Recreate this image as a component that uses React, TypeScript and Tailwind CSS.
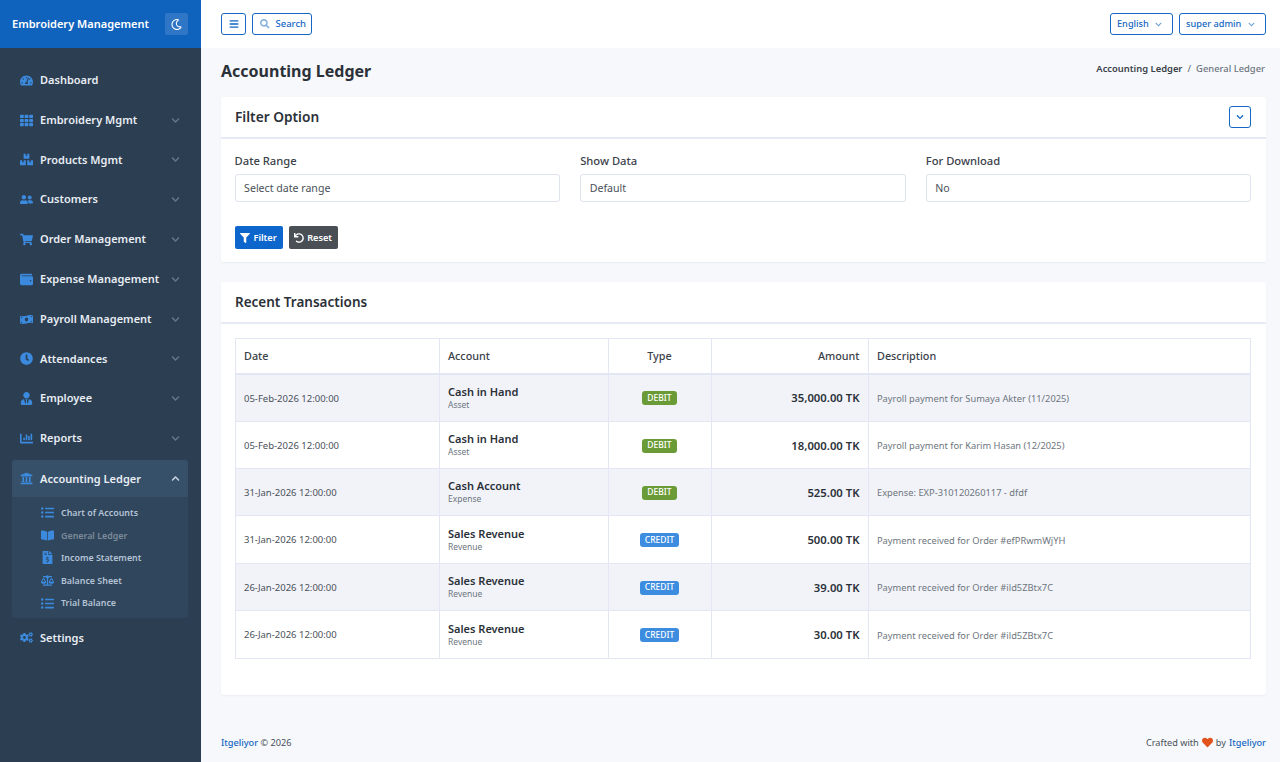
import type { ComponentType } from 'react'
import {
  FaBalanceScale,
  FaBars,
  FaBookOpen,
  FaBoxes,
  FaChartBar,
  FaChevronDown,
  FaChevronUp,
  FaClock,
  FaCogs,
  FaFileInvoiceDollar,
  FaFilter,
  FaHeart,
  FaListUl,
  FaMoneyBillWave,
  FaRegMoon,
  FaSearch,
  FaShoppingCart,
  FaTachometerAlt,
  FaTh,
  FaUndo,
  FaUniversity,
  FaUserFriends,
  FaUserTie,
  FaWallet,
} from 'react-icons/fa'

type Icon = ComponentType<{ className?: string }>

const navItems: { label: string; icon: Icon; arrow?: boolean }[] = [
  { label: 'Dashboard', icon: FaTachometerAlt },
  { label: 'Embroidery Mgmt', icon: FaTh, arrow: true },
  { label: 'Products Mgmt', icon: FaBoxes, arrow: true },
  { label: 'Customers', icon: FaUserFriends, arrow: true },
  { label: 'Order Management', icon: FaShoppingCart, arrow: true },
  { label: 'Expense Management', icon: FaWallet, arrow: true },
  { label: 'Payroll Management', icon: FaMoneyBillWave, arrow: true },
  { label: 'Attendances', icon: FaClock, arrow: true },
  { label: 'Employee', icon: FaUserTie, arrow: true },
  { label: 'Reports', icon: FaChartBar, arrow: true },
]

const subItems: { label: string; icon: Icon; muted?: boolean }[] = [
  { label: 'Chart of Accounts', icon: FaListUl },
  { label: 'General Ledger', icon: FaBookOpen, muted: true },
  { label: 'Income Statement', icon: FaFileInvoiceDollar },
  { label: 'Balance Sheet', icon: FaBalanceScale },
  { label: 'Trial Balance', icon: FaListUl },
]

const rows = [
  { date: '05-Feb-2026 12:00:00', account: 'Cash in Hand', kind: 'Asset', type: 'DEBIT', amount: '35,000.00 TK', desc: 'Payroll payment for Sumaya Akter (11/2025)', h: 'h-[48px]' },
  { date: '05-Feb-2026 12:00:00', account: 'Cash in Hand', kind: 'Asset', type: 'DEBIT', amount: '18,000.00 TK', desc: 'Payroll payment for Karim Hasan (12/2025)', h: 'h-[47px]' },
  { date: '31-Jan-2026 12:00:00', account: 'Cash Account', kind: 'Expense', type: 'DEBIT', amount: '525.00 TK', desc: 'Expense: EXP-310120260117 - dfdf', h: 'h-[47px]' },
  { date: '31-Jan-2026 12:00:00', account: 'Sales Revenue', kind: 'Revenue', type: 'CREDIT', amount: '500.00 TK', desc: 'Payment received for Order #efPRwmWjYH', h: 'h-[48px]' },
  { date: '26-Jan-2026 12:00:00', account: 'Sales Revenue', kind: 'Revenue', type: 'CREDIT', amount: '39.00 TK', desc: 'Payment received for Order #ild5ZBtx7C', h: 'h-[47px]' },
  { date: '26-Jan-2026 12:00:00', account: 'Sales Revenue', kind: 'Revenue', type: 'CREDIT', amount: '30.00 TK', desc: 'Payment received for Order #ild5ZBtx7C', h: 'h-[48px]' },
]

function NavRow({ label, icon: Ico, arrow }: { label: string; icon: Icon; arrow?: boolean }) {
  return (
    <div className="flex h-[39.8px] items-center pl-[19px] pr-[19px]">
      <span className="flex w-[14px] shrink-0 justify-center">
        <Ico className="text-[13px] text-[#3b8ade]" />
      </span>
      <span className="ml-[7px] flex-1 text-[11px] font-semibold text-[#e8edf3]">{label}</span>
      {arrow && <FaChevronDown className="mr-[2px] text-[9px] text-[#66778a]" />}
    </div>
  )
}

function Field({ label, value }: { label: string; value: string }) {
  return (
    <div>
      <div className="mb-[4px] text-[11.2px] font-medium leading-[18px] text-[#3a4149]">{label}</div>
      <div className="flex h-[28px] items-center rounded-[3px] border border-[#dfe3ef] bg-white px-[8.5px] pt-[1px] text-[10.6px] text-[#4a5159]">
        {value}
      </div>
    </div>
  )
}

function OutlineButton({ label, w }: { label: string; w: string }) {
  return (
    <div className={`flex h-[22px] items-center justify-between rounded-[3px] border border-[#1567c3] pl-[6px] pr-[10px] text-[9.2px] font-medium text-[#1567c3] ${w}`}>
      {label}
      <FaChevronDown className="text-[7px] text-[#6a9fd8]" />
    </div>
  )
}

function TypeBadge({ type }: { type: string }) {
  const color = type === 'DEBIT' ? 'bg-[#6b9b37]' : 'bg-[#3c8ce0]'
  return (
    <div className="flex justify-center pt-[1px]">
      <span className={`flex h-[14px] items-center rounded-[3px] px-[5px] text-[8.5px] font-medium text-white ${color}`}>
        {type}
      </span>
    </div>
  )
}

export default function App() {
  return (
    <div className="flex h-[762px] overflow-hidden bg-[#f6f8fc] font-['Noto_Sans','Open_Sans',sans-serif]">
      <aside className="flex w-[200.5px] shrink-0 flex-col bg-[#2c3e52]">
        <div className="flex h-[48px] shrink-0 items-center justify-between bg-[#1063bd] pl-[12px] pr-[12.5px]">
          <span className="text-[11px] font-semibold text-white">Embroidery Management</span>
          <span className="flex h-[22px] w-[23px] items-center justify-center rounded-[2px] bg-[#2f77c6]">
            <FaRegMoon className="text-[11px] text-white" />
          </span>
        </div>
        <nav className="pt-[12.4px]">
          {navItems.map((item) => (
            <NavRow key={item.label} {...item} />
          ))}
          <div className="ml-[12px] mr-[12.5px] mt-[1.6px]">
            <div className="flex h-[37px] items-center rounded-t-[3px] bg-[#37506a] pl-[7px] pr-[6.5px] pt-[1px]">
              <span className="flex w-[14px] shrink-0 justify-center">
                <FaUniversity className="text-[13px] text-[#3b8ade]" />
              </span>
              <span className="ml-[7px] flex-1 text-[11px] font-semibold text-[#e8edf3]">Accounting Ledger</span>
              <FaChevronUp className="mr-[2px] text-[9px] text-[#cfd6de]" />
            </div>
            <div className="flex h-[121px] flex-col justify-center rounded-b-[3px] bg-[#30465c] pt-[1px]">
              {subItems.map(({ label, icon: Ico, muted }) => (
                <div key={label} className="flex h-[22.6px] items-center pl-[28px]">
                  <span className="flex w-[14px] shrink-0 justify-center">
                    <Ico className="text-[13px] text-[#3b8ade]" />
                  </span>
                  <span className={`ml-[7px] text-[8.9px] font-semibold ${muted ? 'text-[#7d8b9a]' : 'text-[#b4c3d6]'}`}>{label}</span>
                </div>
              ))}
            </div>
          </div>
          <NavRow label="Settings" icon={FaCogs} />
        </nav>
      </aside>

      <div className="flex min-w-0 flex-1 flex-col">
        <header className="flex h-[48px] shrink-0 items-center justify-between bg-white pl-[20.5px] pr-[14px]">
          <div className="flex items-center gap-[6px]">
            <div className="flex h-[22px] w-[25px] items-center justify-center rounded-[3px] border border-[#1567c3]">
              <FaBars className="text-[10px] text-[#1567c3]" />
            </div>
            <div className="flex h-[22px] w-[60px] items-center gap-[6px] rounded-[3px] border border-[#1567c3] pl-[7px]">
              <FaSearch className="text-[9.5px] text-[#7eaee0]" />
              <span className="text-[9.5px] font-medium text-[#1567c3]">Search</span>
            </div>
          </div>
          <div className="flex items-center gap-[6px]">
            <OutlineButton label="English" w="w-[63px]" />
            <OutlineButton label="super admin" w="w-[87px]" />
          </div>
        </header>

        <main className="flex flex-1 flex-col pl-[20.5px] pr-[14px]">
          <div className="flex h-[49px] shrink-0 items-center justify-between pb-[3px]">
            <h1 className="text-[16px] font-bold text-[#2b3138]">Accounting Ledger</h1>
            <div className="mb-[3px] mr-[1px] flex items-center text-[9.4px] font-medium">
              <span className="font-semibold text-[#3b4249]">Accounting Ledger</span>
              <span className="mx-[5px] text-[#6d757d]">/</span>
              <span className="text-[#6d757d]">General Ledger</span>
            </div>
          </div>

          <section className="h-[165px] shrink-0 rounded-[3px] bg-white shadow-[0_1px_2px_rgba(40,50,80,0.06)]">
            <div className="flex h-[42px] items-center justify-between border-b-2 border-[#e6eaf4] pl-[14px] pr-[15px]">
              <h2 className="pt-[1px] text-[13.7px] font-semibold text-[#2b3138]">Filter Option</h2>
              <div className="flex h-[22px] w-[22px] items-center justify-center rounded-[3px] border border-[#1567c3]">
                <FaChevronDown className="text-[8px] text-[#1567c3]" />
              </div>
            </div>
            <div className="pl-[13.6px] pr-[14.6px] pt-[13px]">
              <div className="grid grid-cols-3 gap-[20px]">
                <Field label="Date Range" value="Select date range" />
                <Field label="Show Data" value="Default" />
                <Field label="For Download" value="No" />
              </div>
              <div className="mt-[24px] flex gap-[6px]">
                <div className="flex h-[23px] w-[48px] items-center justify-center gap-[3px] rounded-[2px] bg-[#0d66cc] text-[9.2px] font-semibold text-white">
                  <FaFilter className="text-[10px]" />
                  Filter
                </div>
                <div className="flex h-[23px] w-[49px] items-center justify-center gap-[3px] rounded-[2px] bg-[#4a4f55] text-[9.2px] font-semibold text-white">
                  <FaUndo className="text-[10px]" />
                  Reset
                </div>
              </div>
            </div>
          </section>

          <section className="mt-[20px] h-[413px] shrink-0 rounded-[3px] bg-white shadow-[0_1px_2px_rgba(40,50,80,0.06)]">
            <div className="flex h-[42px] items-center border-b-2 border-[#e6eaf4] pl-[14px]">
              <h2 className="pt-[1px] text-[13.5px] font-semibold text-[#2b3138]">Recent Transactions</h2>
            </div>
            <div className="pl-[13.5px] pr-[15px] pt-[14px]">
              <table className="w-full table-fixed border-collapse border border-[#e3e7f3]">
                <colgroup>
                  <col className="w-[204px]" />
                  <col className="w-[169px]" />
                  <col className="w-[103px]" />
                  <col className="w-[157px]" />
                  <col />
                </colgroup>
                <thead>
                  <tr className="h-[35px] border-b-2 border-[#e3e7f3] text-[10.8px] font-medium text-[#3a4149]">
                    <th className="border-r border-[#e3e7f3] px-[8.5px] text-left font-medium">Date</th>
                    <th className="border-r border-[#e3e7f3] px-[8.5px] text-left font-medium">Account</th>
                    <th className="border-r border-[#e3e7f3] px-[8.5px] text-center font-medium">Type</th>
                    <th className="border-r border-[#e3e7f3] px-[8px] text-right font-medium">Amount</th>
                    <th className="px-[8.5px] text-left font-medium">Description</th>
                  </tr>
                </thead>
                <tbody>
                  {rows.map((row, i) => (
                    <tr key={i} className={`${row.h} border-b border-[#e3e7f3] ${i % 2 === 0 ? 'bg-[#f2f3f9]' : 'bg-white'}`}>
                      <td className="border-r border-[#e3e7f3] px-[8.5px] pt-[2px] text-[9.5px] text-[#4a5159]">{row.date}</td>
                      <td className="border-r border-[#e3e7f3] px-[8.5px]">
                        <div className="text-[11px] font-semibold leading-[13px] text-[#2b3138]">{row.account}</div>
                        <div className="text-[8.5px] leading-[13px] text-[#6d757d]">{row.kind}</div>
                      </td>
                      <td className="border-r border-[#e3e7f3]">
                        <TypeBadge type={row.type} />
                      </td>
                      <td className="border-r border-[#e3e7f3] px-[8px] pt-[2px] text-right text-[11.3px] font-semibold text-[#2b3138]">{row.amount}</td>
                      <td className="px-[8.5px] pt-[2px] text-[9.3px] text-[#6d757d]">{row.desc}</td>
                    </tr>
                  ))}
                </tbody>
              </table>
            </div>
          </section>

          <footer className="flex h-[67px] shrink-0 items-center justify-between pt-[29px] text-[9.2px] text-[#4a5159]">
            <div>
              <span className="font-medium text-[#1567c3]">Itgeliyor</span> © 2026
            </div>
            <div className="flex items-center">
              Crafted with
              <FaHeart className="mx-[3px] text-[11px] text-[#e2521d]" />
              by
              <span className="ml-[3px] font-medium text-[#1567c3]">Itgeliyor</span>
            </div>
          </footer>
        </main>
      </div>
    </div>
  )
}
